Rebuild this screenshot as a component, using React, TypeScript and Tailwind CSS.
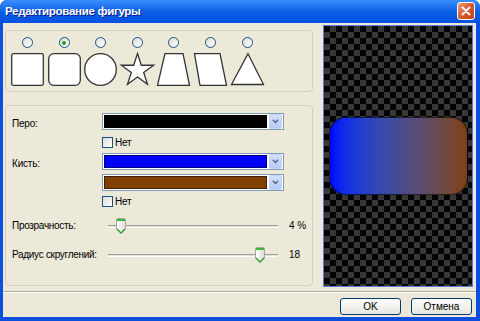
import React from "react";

const FONT = { fontFamily: '"Liberation Sans", Arial, sans-serif' };

const Radio = ({ checked }: { checked?: boolean }) => (
  <div className="w-[11px] h-[11px] rounded-full border border-[#1c5180] bg-gradient-to-br from-[#dcdcd7] to-white flex items-center justify-center">
    {checked && <div className="w-[4px] h-[4px] rounded-full bg-[#21a121]" />}
  </div>
);

const Check = ({ label }: { label: string }) => (
  <div className="flex items-center gap-[2px] h-[11px]">
    <div className="w-[11px] h-[11px] border border-[#1c5180] bg-gradient-to-br from-[#dcdcd7] to-white" />
    <span className="text-[10px] leading-none tracking-[-0.2px]">{label}</span>
  </div>
);

const shapeStroke = { fill: "white", stroke: "#333", strokeWidth: 1.3 };

const shapes: React.ReactNode[] = [
  <rect key="sq" x={0.7} y={0.7} width={31.6} height={31.6} rx={1.5} {...shapeStroke} />,
  <rect key="rsq" x={0.7} y={0.7} width={31.6} height={31.6} rx={5} {...shapeStroke} />,
  <circle key="c" cx={16.5} cy={16.5} r={15.8} {...shapeStroke} />,
  <polygon
    key="st"
    points="16.5,0.5 20.32,12.24 32.67,12.25 22.68,19.51 26.49,31.25 16.5,24 6.51,31.25 10.32,19.51 0.33,12.25 12.68,12.24"
    {...shapeStroke}
  />,
  <polygon key="tr" points="8,0.7 26,0.7 32.5,32.3 0.5,32.3" {...shapeStroke} />,
  <polygon key="pg" points="0.5,0.7 26,0.7 32.5,32.3 6,32.3" {...shapeStroke} />,
  <polygon key="tri" points="17,0.7 32.5,31.5 0.5,31.5" {...shapeStroke} />,
];

const Combo = ({ color }: { color: string }) => (
  <div className="w-[182px] h-[17px] border border-[#7f9db9] bg-white flex items-center p-[1px]">
    <div className="flex-1 h-full border border-black/50" style={{ backgroundColor: color }} />
    <div className="ml-[2px] w-[13px] h-[15px] rounded-[2px] bg-gradient-to-b from-[#d6e2fc] to-[#b6c9f7] border border-[#c2d2f8] flex items-center justify-center">
      <svg width="7" height="5" viewBox="0 0 7 5">
        <polyline points="0.8,0.8 3.5,3.5 6.2,0.8" fill="none" stroke="#4d6185" strokeWidth="1.4" />
      </svg>
    </div>
  </div>
);

const Thumb = () => (
  <svg width="10" height="16" viewBox="0 0 10 16">
    <defs>
      <linearGradient id="tg" x1="0" y1="0" x2="1" y2="0">
        <stop offset="0" stopColor="#ffffff" />
        <stop offset="1" stopColor="#dcdcd4" />
      </linearGradient>
    </defs>
    <path d="M0.5,2 Q0.5,0.5 2,0.5 H8 Q9.5,0.5 9.5,2 V11 L5,15.5 L0.5,11 Z" fill="url(#tg)" stroke="#a8a79c" />
    <rect x="1" y="1" width="8" height="2" fill="#3cb33c" />
    <polyline points="1,11 5,15 9,11" fill="none" stroke="#21a121" strokeWidth="1.2" />
  </svg>
);

const Slider = ({ label, pos, value }: { label: string; pos: number; value: string }) => (
  <div className="flex items-center h-[16px]">
    <span className="w-[96px] text-[10px] leading-none tracking-[-0.3px]">{label}</span>
    <div className="relative w-[170px] h-[16px] flex items-center">
      <div className="w-full h-[3px] border-t border-[#9d9c99] border-b border-b-white bg-[#e4e3dc]" />
      <div className="absolute top-0" style={{ left: pos }}>
        <Thumb />
      </div>
    </div>
    <span className="ml-[11px] text-[10px] leading-none">{value}</span>
  </div>
);

const Button = ({ label }: { label: string }) => (
  <div className="w-[61px] h-[17px] rounded-[3px] border border-[#003c74] bg-gradient-to-b from-white to-[#e6e5de] flex items-center justify-center text-[10px] leading-none">
    {label}
  </div>
);

export default function App() {
  return (
    <div className="w-[480px] h-[321px] rounded-t-[7px] bg-[#0c4fe0] flex flex-col text-black" style={FONT}>
      {/* Title bar */}
      <div className="h-[23px] rounded-t-[7px] bg-gradient-to-b from-[#3b8fff] via-[#0a5fe6] to-[#0350e0] flex items-center pl-[5px] pr-[5px]">
        <span className="text-white font-bold text-[11.5px] tracking-[-0.3px] [text-shadow:1px_1px_0_#0a1c8a]">
          Редактирование фигуры
        </span>
        <div className="ml-auto w-[18px] h-[18px] mt-[-2px] rounded-[3px] border border-white bg-gradient-to-br from-[#f09a7c] via-[#d9572f] to-[#c23d18] flex items-center justify-center">
          <svg width="10" height="10" viewBox="0 0 10 10">
            <path d="M1.5,1.5 L8.5,8.5 M8.5,1.5 L1.5,8.5" stroke="white" strokeWidth="2" strokeLinecap="round" />
          </svg>
        </div>
      </div>

      {/* Client area */}
      <div className="ml-[3px] mr-[4px] h-[294px] bg-[#ece9d8] flex flex-col">
        <div className="flex pl-[2px] pt-[2px] gap-[10px]">
          <div className="pt-[5px] flex flex-col gap-[13px]">
            {/* Shape picker */}
            <div className="w-[308px] h-[62px] rounded-[4px] border border-[#d0d0bf] pl-[5px] pt-[6px] flex gap-[3.6px]">
              {shapes.map((s, i) => (
                <div key={i} className="w-[33px] flex flex-col items-center gap-[5px]">
                  <Radio checked={i === 1} />
                  <svg width="33" height="33" viewBox="0 0 33 33" overflow="visible">
                    {s}
                  </svg>
                </div>
              ))}
            </div>

            {/* Pen / brush settings */}
            <div className="w-[308px] h-[181px] rounded-[4px] border border-[#d0d0bf] pl-[6px] pt-[7px] flex flex-col">
              <div className="flex items-center h-[17px]">
                <span className="w-[90px] text-[10px] leading-none pt-[4px] tracking-[-0.2px]">Перо:</span>
                <Combo color="#000000" />
              </div>
              <div className="ml-[90px] mt-[7px]">
                <Check label="Нет" />
              </div>
              <div className="flex items-center h-[17px] mt-[5px]">
                <span className="w-[90px] text-[10px] leading-none pt-[4px] tracking-[-0.2px]">Кисть:</span>
                <Combo color="#0000ff" />
              </div>
              <div className="ml-[90px] mt-[4px]">
                <Combo color="#804000" />
              </div>
              <div className="ml-[90px] mt-[5px]">
                <Check label="Нет" />
              </div>
              <div className="mt-[11px]">
                <Slider label="Прозрачность:" pos={8} value="4 %" />
              </div>
              <div className="mt-[13px]">
                <Slider label="Радиус скруглений:" pos={147} value="18" />
              </div>
            </div>
          </div>

          {/* Preview */}
          <div className="w-[150px] h-[262px] border border-[#5a7edc] bg-[conic-gradient(#383838_90deg,#030303_90deg_180deg,#383838_180deg_270deg,#030303_270deg)] bg-[length:12px_12px] flex items-center justify-center">
            <div className="w-[139px] h-[78px] rounded-[17px] border border-black/60 bg-gradient-to-r from-[#0000ff] to-[#804000]" />
          </div>
        </div>

        <div className="mt-[4px] h-[2px] border-t border-[#aca899] border-b border-b-white" />

        <div className="mt-[5px] flex justify-end gap-[10px] pr-[4px]">
          <Button label="OK" />
          <Button label="Отмена" />
        </div>
      </div>
    </div>
  );
}
